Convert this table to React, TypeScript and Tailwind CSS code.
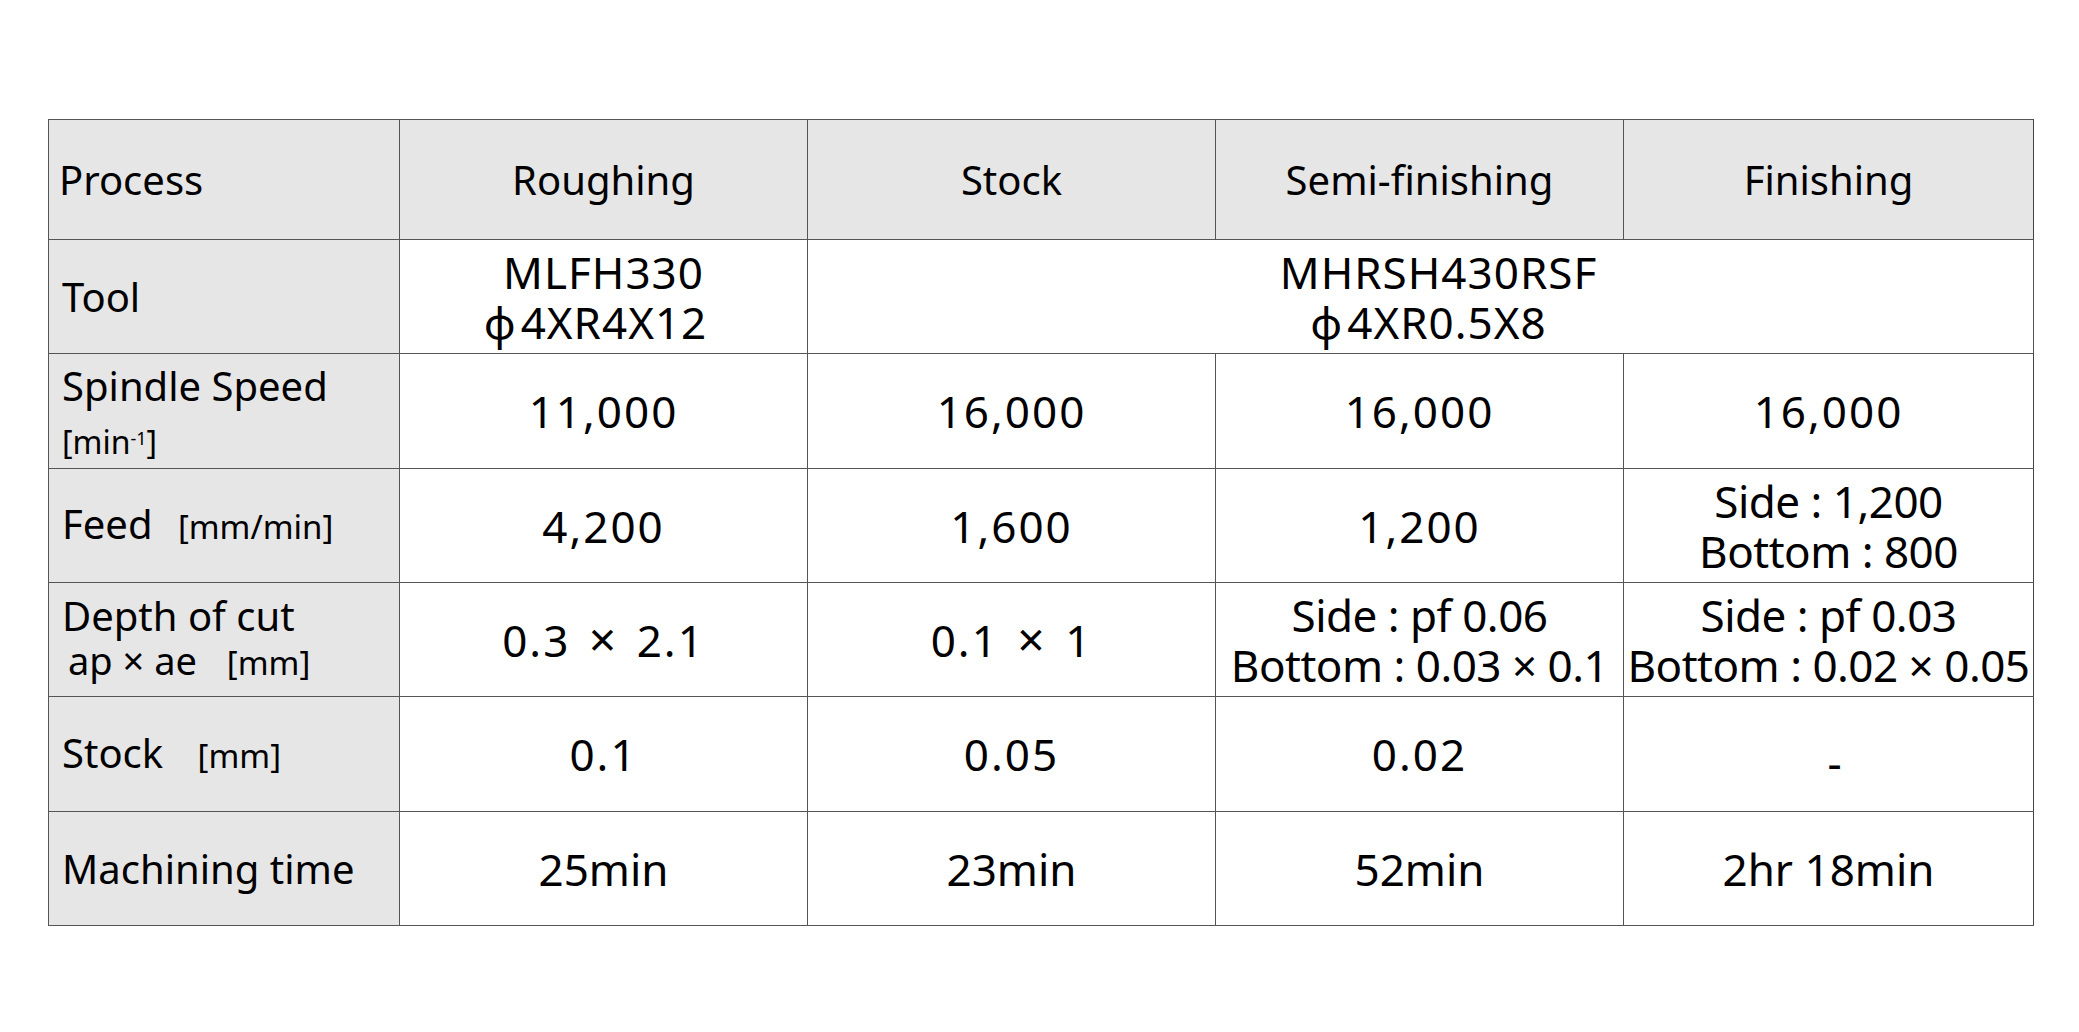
const font = { fontFamily: '"Noto Sans", "Open Sans", "Noto Sans CJK JP", sans-serif' };

function Label({ children }: { children: React.ReactNode }) {
  return (
    <td className="border border-[#555] bg-[#e6e6e6] pl-[13px] text-left align-middle text-[40px] leading-[46px] text-black">
      {children}
    </td>
  );
}

function Val({ children, num }: { children: React.ReactNode; num?: boolean }) {
  return (
    <td
      className={
        num
          ? 'border border-[#555] text-center align-middle text-[44px] leading-[50px] tracking-[2px] whitespace-nowrap'
          : 'border border-[#555] text-center align-middle text-[44px] leading-[50px] whitespace-nowrap'
      }
    >
      {children}
    </td>
  );
}

function Two({ top, bottom }: { top: string; bottom: string }) {
  return (
    <td className="border border-[#555] text-center align-middle text-[44px] leading-[50px] tracking-[-0.5px] whitespace-nowrap">
      <div>{top}</div>
      <div>{bottom}</div>
    </td>
  );
}

function Times() {
  return <span className="mx-[5px] text-[48px]">×</span>;
}

export default function App() {
  return (
    <div className="min-h-[1032px] w-[2079px] bg-white pl-[48px] pt-[119px] text-black" style={font}>
      <table className="w-[1985px] table-fixed border-collapse border border-[#444]">
        <colgroup>
          <col className="w-[351px]" />
          <col className="w-[408px]" />
          <col className="w-[408px]" />
          <col className="w-[408px]" />
          <col className="w-[410px]" />
        </colgroup>
        <tbody>
          <tr className="h-[120px] bg-[#e6e6e6] text-[40px]">
            <td className="border border-[#555] pl-[10px] text-left">Process</td>
            <td className="border border-[#555] text-center">Roughing</td>
            <td className="border border-[#555] text-center">Stock</td>
            <td className="border border-[#555] text-center">Semi-finishing</td>
            <td className="border border-[#555] text-center">Finishing</td>
          </tr>
          <tr className="h-[114px]">
            <Label>Tool</Label>
            <td className="border border-[#555] text-center align-middle text-[44px] leading-[50px] tracking-[1px] whitespace-nowrap">
              <div>MLFH330</div>
              <div className="-translate-x-[8px]">
                <span className="mr-[4px]">ϕ</span>4XR4X12
              </div>
            </td>
            <td colSpan={4} className="border border-[#555] text-center align-middle text-[44px] leading-[50px] tracking-[1px] whitespace-nowrap">
              <div className="translate-x-[18px]">MHRSH430RSF</div>
              <div className="translate-x-[8px]">
                <span className="mr-[4px]">ϕ</span>4XR0.5X8
              </div>
            </td>
          </tr>
          <tr className="h-[114px]">
            <td className="border border-[#555] bg-[#e6e6e6] pl-[13px] pt-[9px] text-left align-middle">
              <div className="text-[40px] leading-[46px]">Spindle Speed</div>
              <div className="mt-[7px] text-[32px] leading-[52px]">
                [min<sup className="text-[18px]">-1</sup>]
              </div>
            </td>
            <Val num>11,000</Val>
            <Val num>16,000</Val>
            <Val num>16,000</Val>
            <Val num>16,000</Val>
          </tr>
          <tr className="h-[114px]">
            <Label>
              Feed <span className="ml-[15px] text-[33px]">[mm/min]</span>
            </Label>
            <Val num>4,200</Val>
            <Val num>1,600</Val>
            <Val num>1,200</Val>
            <Two top="Side : 1,200" bottom="Bottom : 800" />
          </tr>
          <tr className="h-[114px]">
            <td className="border border-[#555] bg-[#e6e6e6] pl-[13px] text-left align-middle">
              <div className="text-[40px] leading-[44px]">Depth of cut</div>
              <div className="pl-[6px] text-[38px] leading-[44px]">
                ap × ae <span className="ml-[20px] text-[33px]">[mm]</span>
              </div>
            </td>
            <Val num>
              0.3 <Times /> 2.1
            </Val>
            <Val num>
              0.1 <Times /> 1
            </Val>
            <Two top="Side : pf 0.06" bottom="Bottom : 0.03 × 0.1" />
            <Two top="Side : pf 0.03" bottom="Bottom : 0.02 × 0.05" />
          </tr>
          <tr className="h-[115px]">
            <Label>
              Stock <span className="ml-[24px] text-[33px]">[mm]</span>
            </Label>
            <Val num>0.1</Val>
            <Val num>0.05</Val>
            <Val num>0.02</Val>
            <Val>
              <span className="relative top-[8px] left-[6px]">-</span>
            </Val>
          </tr>
          <tr className="h-[114px]">
            <Label>Machining time</Label>
            <Val>25min</Val>
            <Val>23min</Val>
            <Val>52min</Val>
            <Val>2hr 18min</Val>
          </tr>
        </tbody>
      </table>
    </div>
  );
}
